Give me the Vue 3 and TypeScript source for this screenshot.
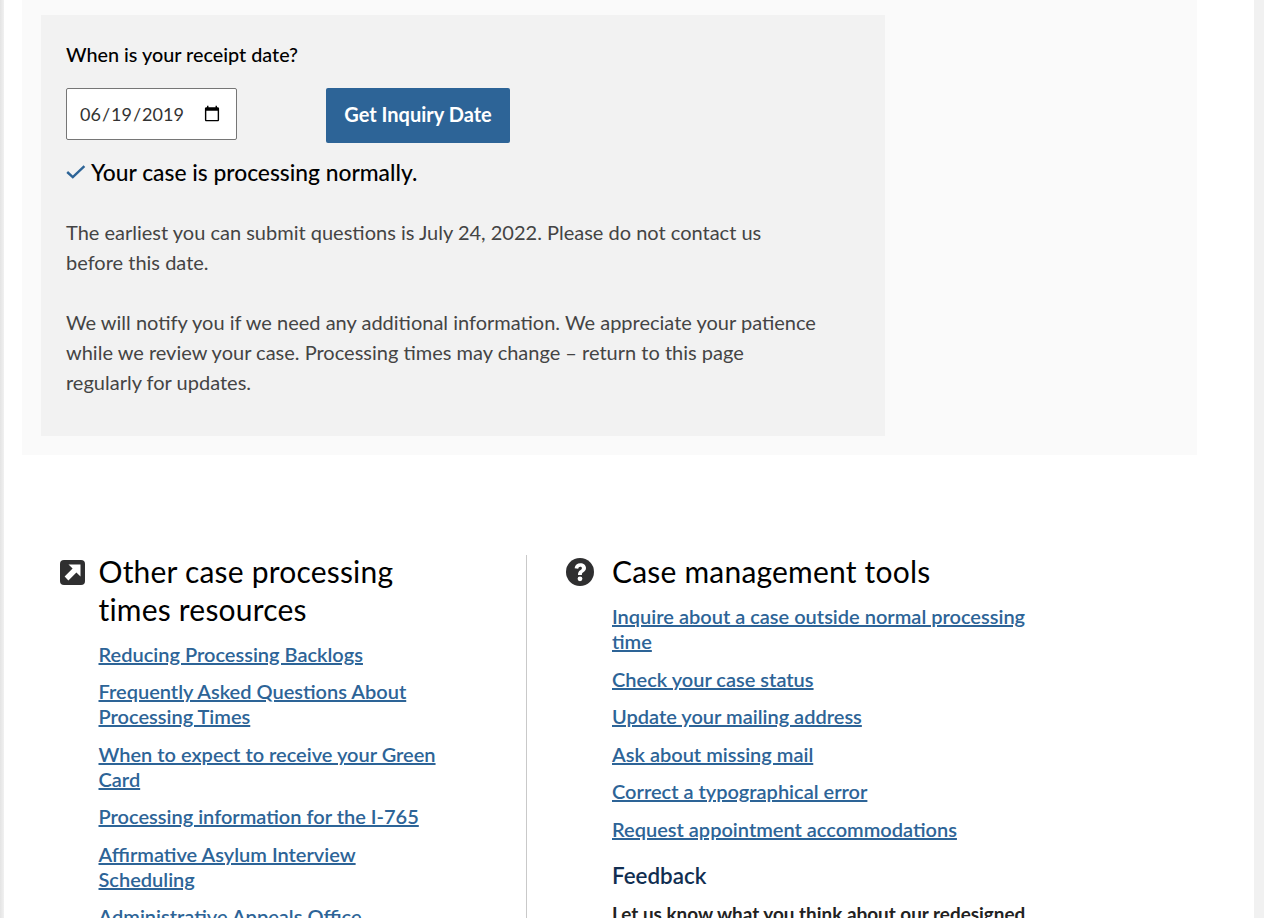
<script setup lang="ts">
const resources = [
  'Reducing Processing Backlogs',
  'Frequently Asked Questions About Processing Times',
  'When to expect to receive your Green Card',
  'Processing information for the I-765',
  'Affirmative Asylum Interview Scheduling',
  'Administrative Appeals Office',
]
const tools = [
  'Inquire about a case outside normal processing time',
  'Check your case status',
  'Update your mailing address',
  'Ask about missing mail',
  'Correct a typographical error',
  'Request appointment accommodations',
]
</script>

<template>
  <div class="viewport">
    <main class="sheet">
      <section class="panel">
        <div class="inquiry">
          <label class="label" for="receipt">When is your receipt date?</label>
          <div class="controls">
            <input id="receipt" class="date" type="date" value="2019-06-19" />
            <button class="submit" type="button">Get Inquiry Date</button>
          </div>
          <p class="status">
            <svg class="check" width="20" height="14" viewBox="0 0 20 14" aria-hidden="true">
              <path d="M1.2 7 L6.8 12.2 L18.4 1.2" fill="none" stroke="#2d6497" stroke-width="2.4" />
            </svg>
            <span>Your case is processing normally.</span>
          </p>
          <p class="copy">The earliest you can submit questions is July 24, 2022. Please do not contact us before this date.</p>
          <p class="copy">We will notify you if we need any additional information. We appreciate your patience while we review your case. Processing times may change – return to this page regularly for updates.</p>
        </div>
      </section>

      <section class="columns">
        <div class="col left">
          <svg class="ico-ext" width="25" height="25" viewBox="0 0 25 25" aria-hidden="true">
            <rect width="25" height="25" rx="4" fill="#2f2f30" />
            <path d="M8.5 4.5 H20.5 V16.5 L16.4 12.4 L8.4 20.4 L4.6 16.6 L12.6 8.6 Z" fill="#fff" />
          </svg>
          <div class="body">
            <h2 class="title">Other case processing times resources</h2>
            <ul class="links">
              <li v-for="r in resources" :key="r"><a href="#">{{ r }}</a></li>
            </ul>
          </div>
        </div>
        <div class="col right">
          <svg class="ico-q" width="28" height="28" viewBox="0 0 28 28" aria-hidden="true">
            <circle cx="14" cy="14" r="14" fill="#2f2f30" />
            <path d="M8.6 10.2 C9 7 11.4 5.2 14.3 5.2 C17.6 5.2 20 7.2 20 10.1 C20 12.3 18.7 13.4 17.3 14.3 C16.2 15 15.9 15.5 15.9 16.9 H12 C11.9 14.6 12.6 13.3 14.3 12.2 C15.4 11.4 15.9 11 15.9 10.2 C15.9 9.3 15.2 8.8 14.2 8.8 C13.1 8.8 12.4 9.5 12.2 10.8 Z" fill="#fff" />
            <circle cx="14" cy="20.8" r="2.4" fill="#fff" />
          </svg>
          <div class="body narrow">
            <h2 class="title">Case management tools</h2>
            <ul class="links tools">
              <li v-for="t in tools" :key="t"><a href="#">{{ t }}</a></li>
            </ul>
            <h3 class="feedback">Feedback</h3>
            <p class="ask">Let us know what you think about our redesigned</p>
          </div>
        </div>
      </section>
    </main>
  </div>
</template>

<style>
html, body { margin: 0; background: #fff; overflow: hidden; }
</style>

<style scoped>
.viewport {
  height: 918px;
  overflow: hidden;
  background: linear-gradient(to right, #e4e4e4, #f1f1f1 4px, #f1f1f1);
  font-family: Lato, "Liberation Sans", sans-serif;
}
.sheet {
  box-sizing: border-box;
  width: 1250px;
  height: 918px;
  margin-left: 4px;
  padding-left: 18px;
  background: #fff;
  overflow: hidden;
}
.panel {
  box-sizing: border-box;
  width: 1175px;
  height: 455px;
  padding: 15px 19px 0;
  background: #fafafa;
}
.inquiry {
  box-sizing: border-box;
  width: 844px;
  height: 421px;
  padding: 27px 25px 0;
  background: #f2f2f2;
}
.label {
  display: block;
  font-size: 19.8px;
  line-height: 25px;
  font-weight: 500;
  color: #000;
}
.controls {
  display: flex;
  align-items: flex-start;
  gap: 89px;
  margin-top: 21px;
}
.date {
  box-sizing: border-box;
  width: 171px;
  height: 52px;
  padding: 0 13px 0 12px;
  border: 1px solid #767676;
  border-radius: 2px;
  background: #fff;
  color: #333;
  font: 400 18px Lato, sans-serif;
}
.submit {
  box-sizing: border-box;
  width: 184px;
  height: 55px;
  padding: 0 0 3px;
  border: 0;
  border-radius: 2px;
  background: #2d6497;
  color: #fff;
  font: 700 20px Lato, sans-serif;
}
.status {
  display: flex;
  align-items: center;
  gap: 5px;
  margin: 14px 0 0;
  font-size: 22.8px;
  line-height: 30px;
  font-weight: 500;
  color: #000;
}
.copy {
  width: 750px;
  margin: 30px 0 0;
  font-size: 20px;
  line-height: 30px;
  color: #444;
}
.columns {
  display: flex;
  margin-top: 100px;
}
.col { display: flex; align-items: flex-start; }
.left {
  box-sizing: border-box;
  width: 505px;
  height: 400px;
  padding-left: 38px;
  border-right: 1px solid #c9c9c9;
}
.right { padding-left: 39px; }
.ico-ext { margin: 5px 13.5px 0 0; flex: none; }
.ico-q { margin: 3px 18px 0 0; flex: none; }
.body { width: 340px; }
.body.narrow { width: 430px; }
.title {
  margin: -3px 0 0;
  font-size: 30px;
  line-height: 38px;
  font-weight: 400;
  letter-spacing: 0.2px;
  color: #000;
}
.links {
  list-style: none;
  margin: 14px 0 0;
  padding: 0;
}
.left .links { margin-top: 13.6px; }
.links li { margin-bottom: 12.5px; font-size: 20px; line-height: 25px; }
.links a { color: #2d6497; text-decoration: underline; font-weight: 600; }
.feedback {
  margin: 20px 0 0;
  font-size: 22.4px;
  line-height: 28px;
  font-weight: 600;
  color: #112e51;
}
.ask {
  margin: 11px 0 0;
  font-size: 18.9px;
  line-height: 25px;
  font-weight: 700;
  color: #222;
  white-space: nowrap;
}
</style>
